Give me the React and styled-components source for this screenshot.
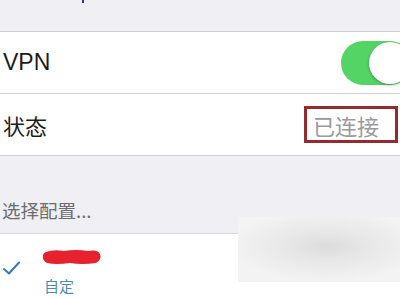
import React from 'react';
import styled, { createGlobalStyle } from 'styled-components';

const GlobalStyle = createGlobalStyle`
  html, body {
    margin: 0;
    padding: 0;
    width: 400px;
    height: 300px;
    overflow: hidden;
    background: #efeff4;
  }
`;

const Screen = styled.div`
  position: relative;
  width: 400px;
  height: 300px;
  overflow: hidden;
  background: #efeff4;
  font-family: 'Liberation Sans', 'Noto Sans CJK SC', sans-serif;
`;

const TopGap = styled.div`
  height: 31px;
  position: relative;
`;

const Group = styled.div`
  background: #fff;
  border-top: 1px solid #cfced3;
  border-bottom: 1px solid #cfced3;
`;

const Row = styled.div`
  display: flex;
  align-items: center;
  justify-content: space-between;
  height: 61px;
  padding-left: 3px;
  border-top: ${(p) => (p.$divider ? '1px solid #d3d2d6' : 'none')};
`;

const Label = styled.span`
  font-size: ${(p) => (p.$cjk ? '22px' : '23px')};
  font-family: ${(p) => (p.$cjk ? "'Noto Sans CJK SC', sans-serif" : "'Liberation Sans', sans-serif")};
  color: #1c1c1c;
`;

const Switch = styled.div`
  position: relative;
  width: 71px;
  height: 44px;
  margin-right: -12px;
  border-radius: 22px;
  background: #55d466;
  > span {
    position: absolute;
    top: 1px;
    right: 1px;
    width: 42px;
    height: 42px;
    border-radius: 50%;
    background: #fff;
    box-shadow: 0 1px 3px rgba(0, 0, 0, 0.35);
  }
`;

const Status = styled.span`
  box-sizing: border-box;
  width: 94px;
  height: 37px;
  margin-right: 2px;
  padding-left: 6px;
  display: flex;
  align-items: center;
  border: 3px solid #962a2e;
  font-size: 22px;
  color: #9a9a9e;
`;

const SectionHeader = styled.div`
  height: 78px;
  display: flex;
  align-items: flex-end;
  padding: 0 0 10px 2px;
  box-sizing: border-box;
  font-size: 18.5px;
  color: #6d6d72;
  font-family: 'Noto Sans CJK SC', sans-serif;
  border-bottom: 1px solid #d7d6da;
`;

const ConfigRow = styled.div`
  background: #fff;
  height: 70px;
  display: flex;
  align-items: flex-start;
  gap: 22px;
  padding: 26px 0 0 3px;
  box-sizing: border-box;
`;

const Check = styled.svg`
  width: 17px;
  height: 14px;
  margin-top: 1px;
`;

const ConfigText = styled.div`
  display: flex;
  flex-direction: column;
  gap: 9px;
`;

const Redacted = styled.svg`
  width: 60px;
  height: 18px;
  margin-top: -12px;
`;

const Sub = styled.span`
  font-size: 15px;
  color: #4b8bba;
  font-family: 'Noto Sans CJK SC', sans-serif;
  padding-left: 2px;
`;

const Blur = styled.div`
  position: absolute;
  left: 238px;
  top: 217px;
  width: 162px;
  height: 65px;
  background: radial-gradient(ellipse 60% 55% at 55% 45%, #dcdcdc 0%, #e8e8e8 45%, #f3f3f3 100%);
`;

const Dot = styled.div`
  position: absolute;
  left: 82px;
  top: 0;
  width: 2px;
  height: 3px;
  background: #2a3a9a;
`;

export default function App() {
  return (
    <Screen>
      <GlobalStyle />
      <TopGap>
        <Dot />
      </TopGap>
      <Group>
        <Row>
          <Label>VPN</Label>
          <Switch>
            <span />
          </Switch>
        </Row>
        <Row $divider>
          <Label $cjk>状态</Label>
          <Status>已连接</Status>
        </Row>
      </Group>
      <SectionHeader>选择配置...</SectionHeader>
      <ConfigRow>
        <Check viewBox="0 0 17 14">
          <path d="M1 8 L6 12.5 L16 1.5" fill="none" stroke="#2f7cc0" strokeWidth="2" strokeLinecap="round" strokeLinejoin="round" />
        </Check>
        <ConfigText>
          <Redacted viewBox="0 0 60 18">
            <path d="M4 4 Q12 1 22 3 Q34 1 46 3 Q56 1 58 6 Q60 12 54 15 Q40 17 28 15 Q14 17 5 15 Q0 12 1 8 Q1 5 4 4 Z" fill="#e8222c" />
          </Redacted>
          <Sub>自定</Sub>
        </ConfigText>
      </ConfigRow>
      <Blur />
    </Screen>
  );
}
